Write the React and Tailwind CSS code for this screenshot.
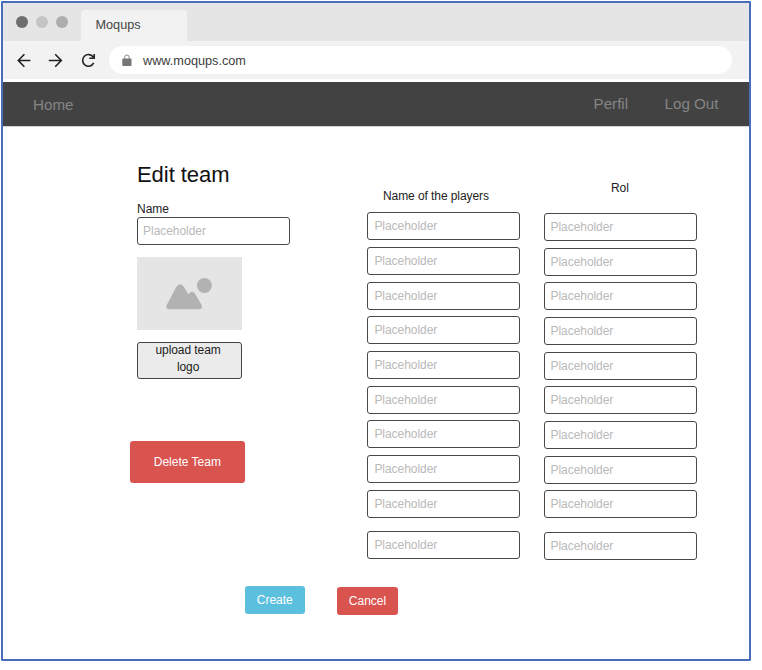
const ROWS = [0, 1, 2, 3, 4, 5, 6, 7, 8];

function Field({ className = "" }) {
  return (
    <input
      type="text"
      placeholder="Placeholder"
      className={`block h-[28px] w-[153px] shrink-0 rounded-[3px] border border-[#484848] bg-white pb-0 text-[12px] leading-[16px] tracking-[-0.05px] text-[#222] placeholder:text-[#b9b9b9] placeholder:opacity-100 outline-none ${className}`}
    />
  );
}

function FieldColumn({ title, className, titleClass, fieldClass }) {
  return (
    <section className={`flex w-[153px] shrink-0 flex-col ${className}`}>
      <h2 className={`text-[12px] leading-[16px] tracking-[-0.08px] text-[#222] ${titleClass}`}>{title}</h2>
      <div className="flex flex-col gap-[6.65px]">
        {ROWS.map((row) => (
          <Field key={row} className={fieldClass} />
        ))}
      </div>
      <Field className={`mt-[13.5px] ${fieldClass}`} />
    </section>
  );
}

function BrowserChrome() {
  return (
    <header>
      <div className="flex h-[38px] items-end bg-[#e5e5e5]">
        <div className="flex h-[38px] w-[78px] gap-[8px] pl-[13px] pt-[13px]">
          <span className="size-[12px] rounded-full bg-[#6e6e6e]" />
          <span className="size-[12px] rounded-full bg-[#c4c4c4]" />
          <span className="size-[12px] rounded-full bg-[#adadad]" />
        </div>
        <div className="h-[31px] w-[106px] rounded-t-[4px] bg-[#f2f2f2] pl-[14.5px] pt-[7px] text-[12.7px] leading-[16px] text-[#444]">
          Moqups
        </div>
      </div>
      <div className="flex h-[38px] items-center bg-[#f2f2f2] pl-[14px]">
        <svg className="h-[16px] w-[80px] shrink-0" viewBox="0 -1 80 16" fill="none" stroke="#222" strokeWidth="1.6">
          <path d="M13.4 7.5H1.5M7.4 1.3L1.3 7.5L7.4 13.7" />
          <path d="M31.8 7.5H44M38.2 1.3L44.3 7.5L38.2 13.7" />
          <path d="M76.2 4A5.8 5.8 0 1 0 76.7 9.9M77.2 0.9V5.3H72.3" />
        </svg>
        <div className="ml-[12px] flex h-[28px] w-[623px] items-center rounded-full bg-white pl-[13px]">
          <svg className="size-[13px]" viewBox="0 0 13 13">
            <path d="M2.7 6V3.2a2.2 2.2 0 0 1 4.4 0V6" fill="none" stroke="#858585" />
            <rect x="0.3" y="4.4" width="9.2" height="7.6" rx="0.8" fill="#777" />
          </svg>
          <span className="ml-[8px] pt-[2px] text-[12.7px] leading-[16px] text-[#3d3d3d]">www.moqups.com</span>
        </div>
      </div>
    </header>
  );
}

export default function App() {
  return (
    <div className="h-[670px] w-[762px] overflow-hidden bg-white pl-px pt-px font-['Liberation_Sans',Arial,sans-serif]">
      <div className="h-[660px] w-[750px] overflow-hidden rounded-[1px] border-2 border-[#4b6bbb] bg-white">
        <BrowserChrome />
        <nav className="mt-[3px] flex h-[44px] items-center bg-[#424242] pl-[30px] text-[15.2px] leading-[18px] text-[#858585]">
          <a className="w-[560.5px] pt-[2px]">Home</a>
          <a className="w-[71px]">Perfil</a>
          <a>Log Out</a>
        </nav>
        <main className="flex h-[533px] flex-col border-t border-[#d0d0d0]">
          <div className="flex h-[459px]">
            <section className="flex w-[364px] shrink-0 flex-col items-start pl-[133.6px] pt-[35px]">
              <h1 className="pl-[0.4px] text-[22px] leading-[26px] tracking-[-0.05px] text-[#111]">Edit team</h1>
              <label className="mt-[13px] pl-[0.4px] text-[12px] leading-[16px] text-[#222]">Name</label>
              <Field className="px-[5.5px] pb-px" />
              <div className="ml-[0.4px] mt-[11.5px] flex h-[73px] w-[104.6px] items-center justify-center bg-[#e5e5e5]">
                <svg className="h-[73px] w-[105px]" viewBox="0 0 105 73" fill="#b2b2b2">
                  <path d="M29.9 48L39.2 30.3Q43.3 24.3 47.4 30.3L51.6 37.3Q55.1 32.3 58.6 37.3L64.6 47.5Q66.8 52.2 62 52.2H33Q28 52.2 29.9 48Z" />
                  <circle cx="67.7" cy="28.5" r="7.5" />
                </svg>
              </div>
              <button className="mt-[12.5px] flex h-[36.5px] w-[105px] items-start justify-center rounded-[3px] border border-[#444] bg-[#ebebeb] pr-[2px] text-center text-[12px] leading-[17px] tracking-[-0.08px] text-[#222]">
                <span className="-mt-px">upload team<br />logo</span>
              </button>
              <button className="-ml-[7px] mt-[62.5px] h-[41.5px] w-[115.5px] rounded-[3px] bg-[#d9534f] text-[12px] leading-[16px] text-white">
                Delete Team
              </button>
            </section>
            <FieldColumn title="Name of the players" className="pt-[61px]" titleClass="mb-[8.4px] pl-[16px]" fieldClass="px-[6.4px]" />
            <FieldColumn title="Rol" className="ml-[23.7px] pt-[53px]" titleClass="mb-[17.2px] pr-[0.6px] text-center" fieldClass="px-[5.8px]" />
          </div>
          <div className="flex items-start gap-[32.5px] pl-[241.6px] text-[12px] leading-[16px] text-white">
            <button className="h-[28px] w-[60.3px] rounded-[3px] bg-[#5bc0de]">Create</button>
            <button className="mt-px h-[28px] w-[60.3px] rounded-[3px] bg-[#d9534f]">Cancel</button>
          </div>
        </main>
      </div>
    </div>
  );
}
